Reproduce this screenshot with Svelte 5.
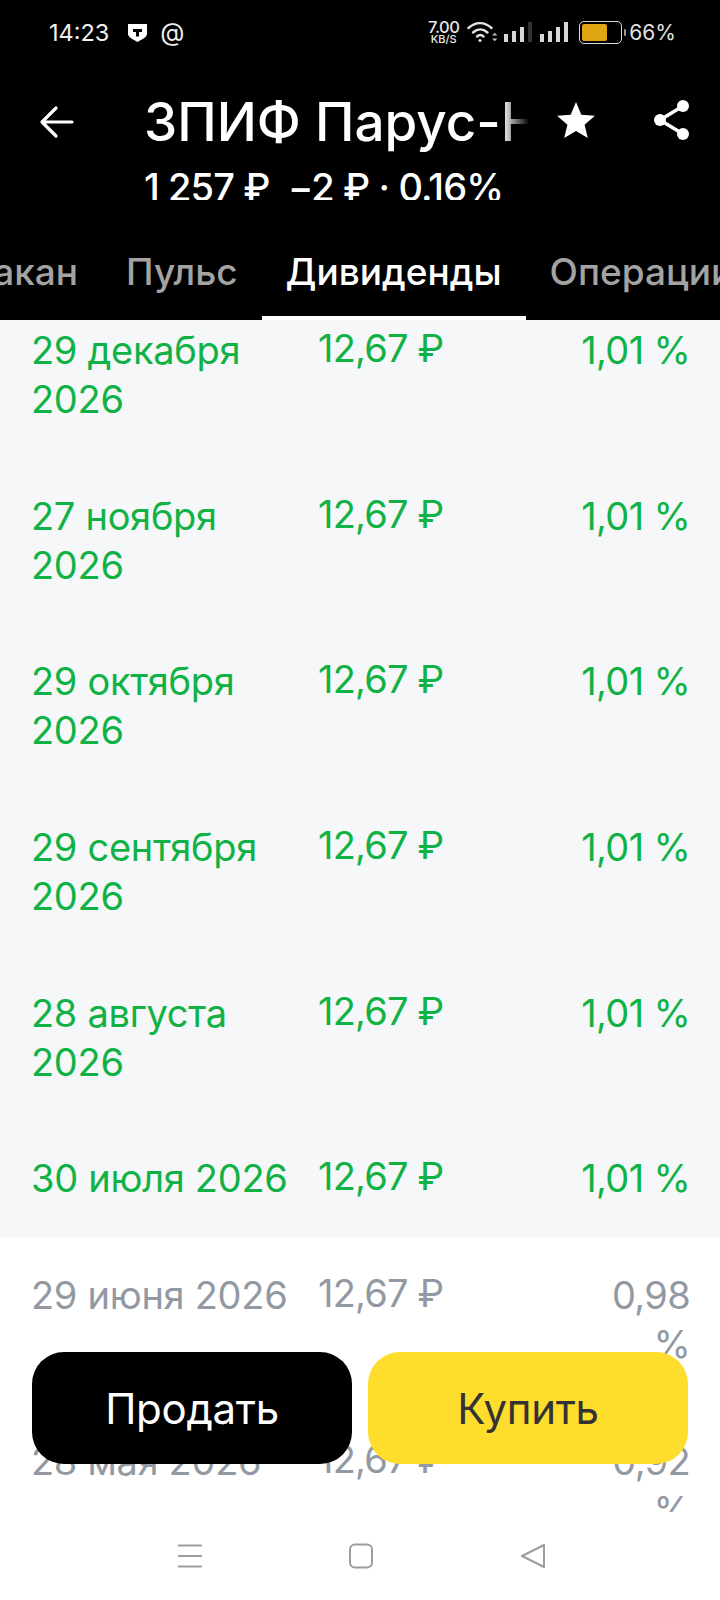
<script>
  const rows = [
    { date: '29 декабря 2026', pct: '1,01 %', paid: true },
    { date: '27 ноября 2026', pct: '1,01 %', paid: true },
    { date: '29 октября 2026', pct: '1,01 %', paid: true },
    { date: '29 сентября 2026', pct: '1,01 %', paid: true },
    { date: '28 августа 2026', pct: '1,01 %', paid: true },
    { date: '30 июля 2026', pct: '1,01 %', paid: true },
    { date: '29 июня 2026', pct: '0,98 %', paid: false },
    { date: '28 мая 2026', pct: '0,92 %', paid: false }
  ];
  const paidRows = rows.filter((r) => r.paid);
  const nextRows = rows.filter((r) => !r.paid);
</script>

{#snippet row(r)}
  <div class="row">
    <div class="date">{r.date}</div>
    <div class="amount">12,67 ₽</div>
    <div class="pct">{r.pct}</div>
  </div>
{/snippet}

<div class="screen">
  <header class="top">
    <div class="status">
      <div class="status-left">
        <span class="time">14:23</span>
        <svg class="shield" width="19" height="19" viewBox="0 0 19 19"><path d="M0 1h19v10c0 3-5 5.500-9.500 8C5 16.500 0 14 0 11z" fill="#fff"/><path d="M5 6h9v3h-3v4.500H8V9H5z" fill="#000"/></svg>
        <span class="at">@</span>
      </div>
      <div class="status-right">
        <span class="speed"><b>7.00</b><i>KB/S</i></span>
        <svg class="wifi" width="31" height="24" viewBox="0 0 31 24" fill="none" stroke="#e4e4e4" stroke-width="2.400" stroke-linecap="round">
          <path d="M1.500 8c7-6.500 16-6.500 23 0"/><path d="M6 12.500c4.500-4 10-4 14.500 0"/><path d="M10 16.500c2-1.700 4.500-1.700 6.500 0"/>
          <circle cx="13" cy="20.500" r="1.500" fill="#e4e4e4" stroke="none"/>
          <path d="M25 15.500l2.700-2.700 2.700 2.700zM25 18.500l2.700 2.700 2.700-2.700z" fill="#bbb" stroke="none"/>
        </svg>
        <span class="bars"><i class="b1"></i><i class="b2"></i><i class="b3"></i><i class="b4 dim"></i></span>
        <span class="bars second"><i class="b1"></i><i class="b2"></i><i class="b3"></i><i class="b4"></i></span>
        <span class="battery"><span class="cell"><span class="fill"></span></span><span class="nub"></span></span>
        <span class="pctlabel">66%</span>
      </div>
    </div>

    <div class="titlebar">
      <svg class="back" width="36" height="36" viewBox="0 0 36 36" fill="none" stroke="#fff" stroke-width="3.200" stroke-linecap="round" stroke-linejoin="round"><path d="M33 18H3.500M17 4 3 18l14 14"/></svg>
      <div class="titles">
        <div class="title">ЗПИФ Парус-Новое</div>
        <div class="price">1 257 ₽&nbsp; −2 ₽ · 0.16%</div>
      </div>
      <svg class="star" width="40" height="40" viewBox="0 0 40 40"><path d="M20 2l5.300 12.700 13.700 1.100-10.400 8.900 3.200 13.300L20 31l-11.800 7 3.200-13.300L1 15.800l13.700-1.100z" fill="#fff"/></svg>
      <svg class="share" width="42" height="42" viewBox="0 0 42 42" fill="none"><path d="M33 6 10 20l23 14" stroke="#fff" stroke-width="3.500"/><circle cx="33" cy="6" r="6" fill="#fff"/><circle cx="10" cy="20" r="6" fill="#fff"/><circle cx="33" cy="34" r="6" fill="#fff"/></svg>
    </div>

    <nav class="tabs">
      <span class="tab">Стакан</span>
      <span class="tab">Пульс</span>
      <span class="tab active">Дивиденды</span>
      <span class="tab">Операции</span>
    </nav>
  </header>

  <main class="content">
    <section class="paid">
      {#each paidRows as r}{@render row(r)}{/each}
    </section>
    <section class="next">
      {#each nextRows as r}{@render row(r)}{/each}
    </section>
  </main>

  <div class="actions">
    <button class="btn sell">Продать</button>
    <button class="btn buy">Купить</button>
  </div>

  <footer class="nav">
    <svg width="24" height="24" viewBox="0 0 24 24" stroke="#9a9da3" stroke-width="2" fill="none"><path d="M0 1.500h24M0 12h24M0 22.500h24"/></svg>
    <svg width="26" height="26" viewBox="0 0 26 26" stroke="#9a9da3" stroke-width="2" fill="none"><rect x="2" y="1.500" width="22" height="23" rx="5"/></svg>
    <svg width="26" height="26" viewBox="0 0 26 26" stroke="#9a9da3" stroke-width="2" fill="none" stroke-linejoin="round"><path d="M24 2v22L2 13z"/></svg>
  </footer>
</div>

<style>
  :global(body) {
    margin: 0;
    background: #fff;
  }
  .screen {
    width: 720px;
    height: 1600px;
    position: relative;
    overflow: hidden;
    display: flex;
    flex-direction: column;
    font-family: Inter, "Liberation Sans", sans-serif;
    background: #fff;
  }
  .top {
    background: #000;
    color: #fff;
    height: 320px;
    flex: none;
    display: flex;
    flex-direction: column;
    overflow: hidden;
  }
  .status {
    height: 64px;
    padding: 0 44px 0 49px;
    display: flex;
    justify-content: space-between;
    align-items: center;
  }
  .status-left,
  .status-right {
    display: flex;
    align-items: center;
  }
  .time {
    font-size: 23.500px;
    color: #eee;
    margin-right: 19px;
  }
  .at {
    font-size: 25px;
    margin-left: 13px;
    color: #eee;
  }
  .speed {
    display: flex;
    flex-direction: column;
    align-items: center;
    line-height: 1;
    color: #e8e8e8;
    margin-right: 8px;
  }
  .speed b {
    font-size: 16.500px;
    font-weight: 500;
    letter-spacing: -0.5px;
    line-height: 14px;
  }
  .speed i {
    font-size: 11px;
    font-style: normal;
    font-weight: 500;
    line-height: 11px;
  }
  .wifi {
    margin-right: 6px;
  }
  .bars {
    display: flex;
    align-items: flex-end;
    gap: 4px;
    height: 20px;
  }
  .second {
    margin-left: 8px;
  }
  .bars i {
    width: 4px;
    background: #d8d8d8;
  }
  .b1 { height: 8px; }
  .b2 { height: 11px; }
  .b3 { height: 15px; }
  .b4 { height: 20px; }
  .bars .dim { background: #333; }
  .battery {
    display: flex;
    align-items: center;
    margin-left: 11px;
  }
  .cell {
    width: 37px;
    height: 17px;
    border: 1.500px solid #ddd;
    border-radius: 5px;
    padding: 2px;
    display: block;
  }
  .fill {
    display: block;
    width: 25px;
    height: 100%;
    background: #dfa512;
    border-radius: 2px;
  }
  .nub {
    width: 2px;
    height: 7px;
    margin-left: 2px;
    background: #999;
    border-radius: 1px;
  }
  .pctlabel {
    font-size: 21px;
    color: #e4e4e4;
    margin-left: 3px;
  }

  .titlebar {
    height: 140px;
    padding-left: 39px;
    display: flex;
    align-items: flex-start;
    position: relative;
  }
  .back {
    margin-top: 40px;
    flex: none;
  }
  .titles {
    width: 385px;
    margin-left: 69px;
    margin-top: 26px;
    overflow: hidden;
    flex: none;
  }
  .title {
    font-size: 53px;
    line-height: 64px;
    font-weight: 500;
    white-space: nowrap;
    overflow: hidden;
    mask-image: linear-gradient(to right, #000 93%, transparent);
  }
  .price {
    font-size: 38px;
    line-height: 66px;
    height: 46px;
    font-weight: 500;
    letter-spacing: -0.9px;
    white-space: nowrap;
    overflow: hidden;
  }
  .star {
    position: absolute;
    left: 556px;
    top: 36px;
  }
  .share {
    position: absolute;
    left: 650px;
    top: 36px;
  }

  .tabs {
    height: 116px;
    display: flex;
    margin-left: -75.500px;
    white-space: nowrap;
    font-size: 37px;
    font-weight: 500;
    color: #a3a3a3;
  }
  .tab {
    padding: 42px 24px 0;
    line-height: 52px;
  }
  .active {
    color: #fff;
    box-shadow: inset 0 -4px 0 #fff;
  }

  .content {
    flex: 1;
    overflow: hidden;
    font-size: 38px;
    line-height: 49px;
    margin-bottom: 88px;
  }
  .paid {
    background: #f6f7f8;
    color: #10b245;
    margin-top: -28px;
  }
  .next {
    color: #9299a2;
  }
  .row {
    display: grid;
    grid-template-columns: 275px 1fr 112px;
    column-gap: 12px;
    padding: 33.850px 32px 33.850px 31px;
  }
  .date {
    letter-spacing: -0.3px;
  }
  .amount {
    letter-spacing: -0.8px;
    margin-top: -2px;
  }
  .pct {
    text-align: right;
    letter-spacing: -0.7px;
    margin-right: -2px;
  }

  .actions {
    position: absolute;
    left: 32px;
    right: 32px;
    top: 1352px;
    display: grid;
    grid-template-columns: 1fr 1fr;
    gap: 16px;
  }
  .btn {
    height: 112px;
    border: none;
    border-radius: 32px;
    font: inherit;
    font-size: 42px;
    letter-spacing: -0.3px;
    padding: 0;
  }
  .sell {
    background: #000;
    color: #fff;
  }
  .buy {
    background: #ffdd2d;
    color: #333;
  }

  .nav {
    height: 88px;
    background: #fff;
    position: absolute;
    left: 0;
    right: 0;
    bottom: 0;
    padding-left: 4px;
    display: flex;
    align-items: center;
    justify-content: center;
    gap: 146px;
  }
</style>
